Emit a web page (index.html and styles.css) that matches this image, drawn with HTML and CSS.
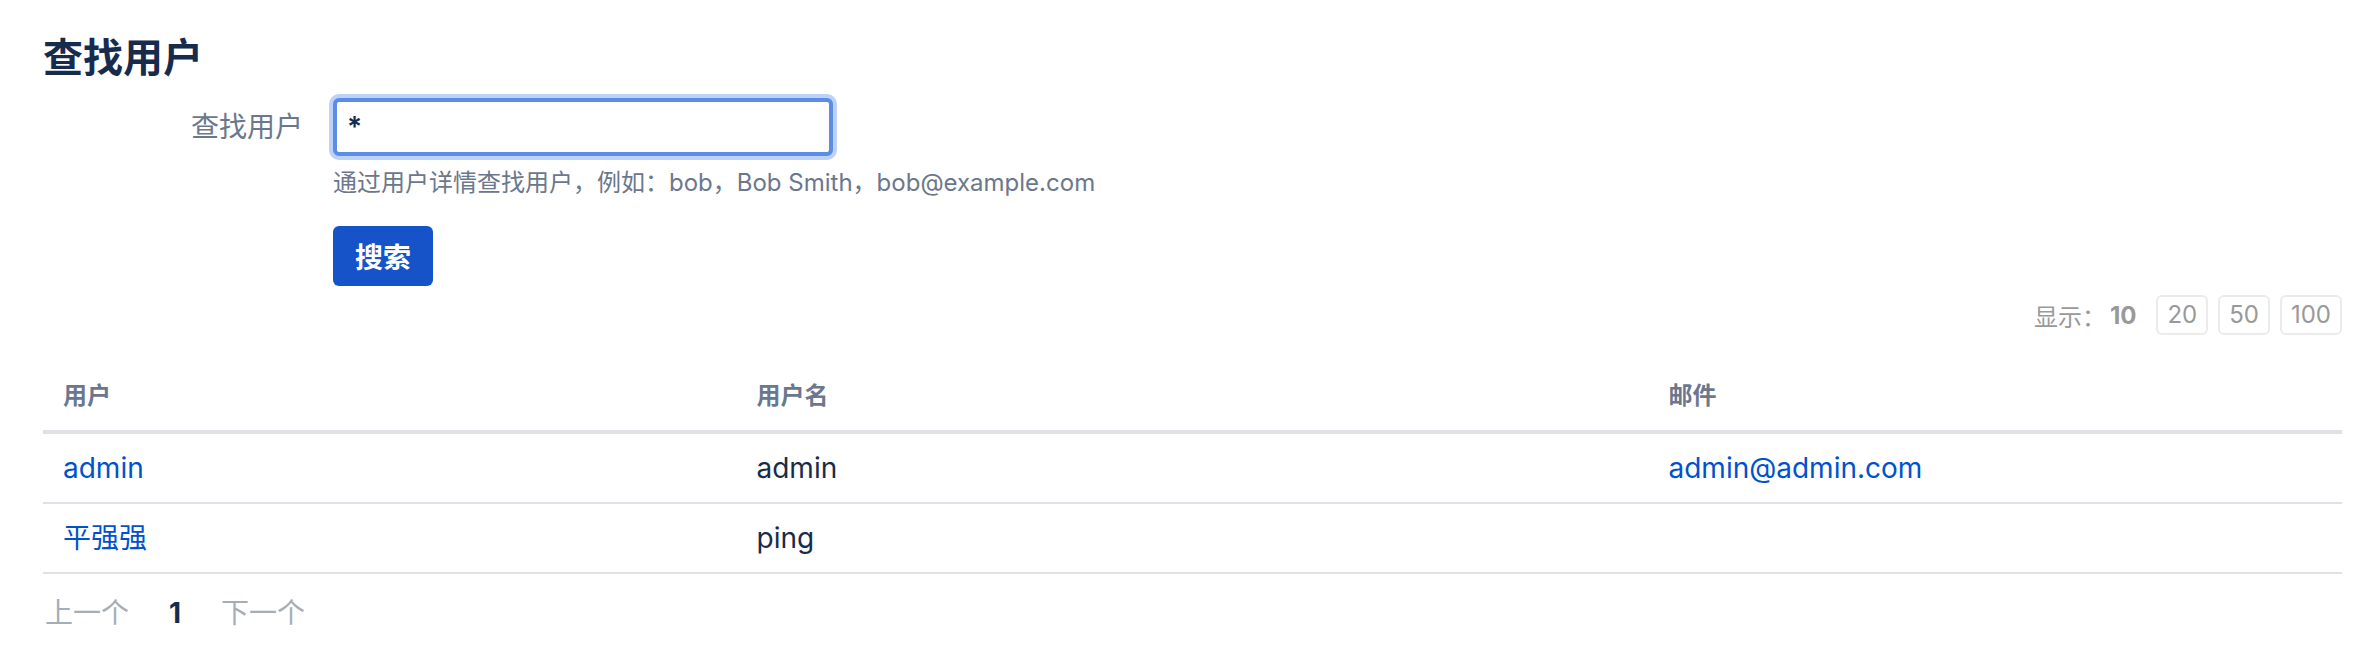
FILE: index.html
```html
<!DOCTYPE html>
<html lang="zh-CN">
<head>
<meta charset="utf-8">
<title>查找用户</title>
<link rel="stylesheet" href="styles.css">
</head>
<body>
<div class="page">
  <h2 class="title">查找用户</h2>
  <form class="search-form">
    <label class="field-label" for="q">查找用户</label>
    <input id="q" class="field-input" type="text" value="*">
    <div class="field-desc">通过用户详情查找用户，例如：bob，Bob Smith，bob@example.com</div>
    <div class="field-actions"><button class="btn-primary" type="button">搜索</button></div>
  </form>
  <div class="page-size">
    <span class="page-size-label">显示：</span>
    <span class="page-size-current">10</span>
    <a class="page-size-option" href="#">20</a>
    <a class="page-size-option" href="#">50</a>
    <a class="page-size-option" href="#">100</a>
  </div>
  <table class="users">
    <thead>
      <tr><th class="col-user">用户</th><th class="col-name">用户名</th><th class="col-mail">邮件</th></tr>
    </thead>
    <tbody>
      <tr><td><a class="link" href="#">admin</a></td><td>admin</td><td><a class="link" href="#">admin@admin.com</a></td></tr>
      <tr><td><a class="link" href="#">平强强</a></td><td>ping</td><td></td></tr>
    </tbody>
  </table>
  <div class="pagination">
    <span class="pg-disabled">上一个</span>
    <span class="pg-current">1</span>
    <span class="pg-disabled">下一个</span>
  </div>
</div>
</body>
</html>
```
FILE: styles.css
```css
html, body {
  margin: 0;
  padding: 0;
  background: #ffffff;
}
body {
  font-family: Inter, "Noto Sans CJK SC", sans-serif;
  color: #172b4d;
}
.page {
  padding: 30px 20px 0 43px;
}
.title {
  margin: 0;
  font-size: 40px;
  line-height: 56px;
  font-weight: 700;
  color: #172b4d;
}
.search-form {
  display: grid;
  grid-template-columns: 260px 1fr;
  column-gap: 30px;
  margin-top: 12px;
}
.field-label {
  grid-column: 1;
  grid-row: 1;
  text-align: right;
  font-size: 28px;
  line-height: 58px;
  color: #6b778c;
}
.field-input {
  grid-column: 2;
  grid-row: 1;
  box-sizing: border-box;
  width: 500px;
  height: 58px;
  margin: 0;
  padding: 0 10px;
  font-family: Inter, "Noto Sans CJK SC", sans-serif;
  font-size: 28px;
  font-weight: 600;
  color: #172b4d;
  background: #ffffff;
  border: 4px solid #5b8ce6;
  border-radius: 6px;
  box-shadow: 0 0 0 4px #bcd2f6;
  outline: none;
}
.field-desc {
  grid-column: 2;
  grid-row: 2;
  margin-top: 11px;
  font-size: 24px;
  line-height: 32px;
  color: #6b778c;
}
.field-actions {
  grid-column: 2;
  grid-row: 3;
  margin-top: 27px;
}
.btn-primary {
  width: 100px;
  height: 60px;
  padding: 0;
  border: 0;
  border-radius: 6px;
  background: #1652c8;
  color: #ffffff;
  font-family: Inter, "Noto Sans CJK SC", sans-serif;
  font-size: 28px;
  font-weight: 700;
}
.page-size {
  display: flex;
  justify-content: flex-end;
  align-items: center;
  margin-top: 9px;
  font-size: 24px;
  color: #999999;
}
.page-size-label {
  margin-right: 4px;
}
.page-size-current {
  font-weight: 700;
  margin-right: 20px;
}
.page-size-option {
  box-sizing: border-box;
  height: 40px;
  line-height: 36px;
  padding: 0 9px;
  margin-left: 10px;
  border: 2px solid #ebebeb;
  border-radius: 6px;
  color: #999999;
  text-decoration: none;
}
.page-size-current + .page-size-option {
  margin-left: 0;
}
.users {
  width: 100%;
  margin-top: 27px;
  border-collapse: collapse;
  table-layout: fixed;
}
.col-user { width: 30%; }
.col-name { width: 40%; }
.col-mail { width: 30%; }
.users th {
  text-align: left;
  padding: 14px 20px;
  font-size: 24px;
  line-height: 40px;
  font-weight: 700;
  color: #6b778c;
  border-bottom: 4px solid #dfe1e6;
}
.users td {
  padding: 14px 20px;
  font-size: 28px;
  line-height: 40px;
  color: #172b4d;
  border-bottom: 2px solid #dfe1e6;
}
.link {
  color: #0052cc;
  text-decoration: none;
}
.pagination {
  display: flex;
  gap: 40px;
  margin-top: 19px;
  margin-left: 2px;
  font-size: 28px;
  line-height: 40px;
}
.pg-disabled {
  color: #a5adba;
}
.pg-current {
  font-weight: 700;
  color: #172b4d;
}
```
